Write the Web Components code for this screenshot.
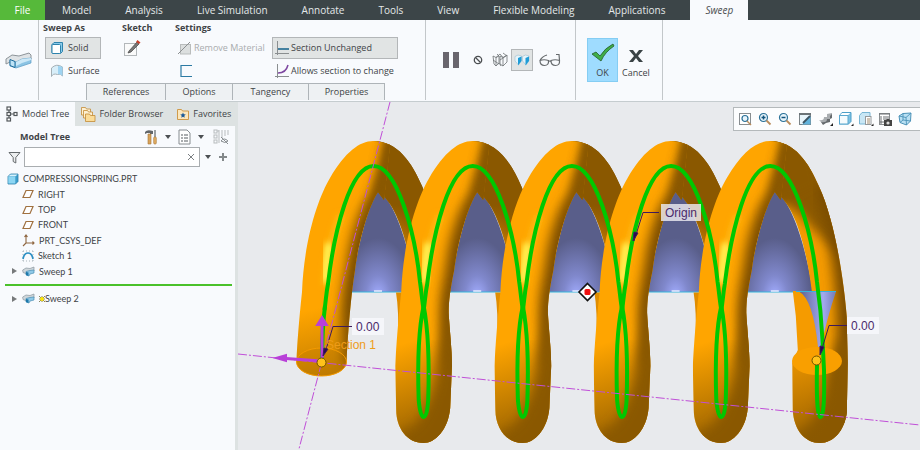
<!DOCTYPE html>
<html lang="en">
<head>
<meta charset="utf-8">
<title>Sweep</title>
<style>
html,body{margin:0;height:100%}
body{font:9px/14px "Open Sans","Noto Sans",sans-serif;color:#404346;background:#f8fafd}
</style>
</head>
<body>
<cad-app></cad-app>
<script>
const ICONS = {
  sweepBig: [28, 22, `<path d="M1 10l6-4 7 1 10-3 2 2v4l-9 4-6 1-6-2-4 2z" fill="#dfe3e6" stroke="#8d9499"/><path d="M5 11l6 2 6-3 9-1v5l-9 3-6 2-6-2z" fill="#8cc4e4" stroke="#5b9cc4" stroke-width=".7"/><path d="M11 13l6-3 9-1v2l-9 3-6 3z" fill="#cce8f7"/><path d="M5 10.500l5 2v6l-5-2z" fill="#bfe3f6" stroke="#1d6d9c"/>`],
  solid: [14, 14, `<path d="M2 3.500l2-2h8.500v9l-2 2H3q-1 0-1-1z" fill="#8bcbea" stroke="#2e83ad"/><rect x="2" y="3.500" width="8.500" height="9" rx="1" fill="#fff" stroke="#2e83ad"/>`],
  surface: [14, 14, `<path d="M1.500 4q5-5 11-1v9q-2-3-5-1.500Q3 9 1.500 12.500z" fill="#d8eef9" stroke="#a5b0b6"/><path d="M8 2q3 0 4.500 1v9Q11 10 8 10z" fill="#9fd3f1"/>`],
  sketch: [18, 18, `<rect x="1.500" y="4.500" width="12" height="12" fill="#fafafa" stroke="#b3b7ba"/><path d="M6 12l8-9 2 2-8 8-3 1z" fill="#777" stroke="#444" stroke-width=".7"/><path d="M13 3l1.500-2 3 2.500L16 5z" fill="#c8402b"/>`],
  remove: [16, 14, `<rect x="3.500" y="3.500" width="10" height="9.500" fill="#dcdfdf" stroke="#b9bcbc"/><path d="M1 13L13 1" stroke="#8c8f91"/>`],
  thin: [14, 14, `<path d="M13 1.500H2v11h11" fill="none" stroke="#2c7aa3" stroke-width="1.200"/>`],
  constant: [16, 16, `<path d="M3.500 1v14M1 13.500h14" stroke="#8a8e90"/><path d="M4 9h11" stroke="#10608a" stroke-width="1.500"/>`],
  variable: [16, 16, `<path d="M3.500 1v14M1 13.500h14" stroke="#8a8e90"/><path d="M4 10q8 0 10-8" fill="none" stroke="#7d46a0" stroke-width="1.500"/>`],
  pause: [18, 18, `<path d="M1 1h6v16H1zM11 1h6v16h-6z" fill="#69656d"/>`],
  none: [10, 10, `<circle cx="5" cy="5" r="3.700" fill="none" stroke="#4c4f52" stroke-width="1.300"/><path d="M2.500 2.500l5 5" stroke="#4c4f52" stroke-width="1.300"/>`],
  unattached: [16, 16, `<path d="M1 4l3 1.500L7 4v7l-3 3-2-2zM4 5.500V14M8 4l3 1.500L15 3v7l-4 4-3-2zM11 5.500V14M7 4L5 2M4 5.500L8 2l3 3.500M11 1l4 3M7 11l2 3M1 8l6 4M8 8l6-4" fill="none" stroke="#6d7275" stroke-width=".8"/>`],
  verify: [16, 14, `<path d="M1 3.500L4 2l3.500 1v4.500L4.500 12 1 8z" fill="#e5f4fb" stroke="#9dbccb" stroke-width=".6"/><path d="M4 5l3.500-1.500V8L4 12.500z" fill="#1f9cd6"/><path d="M8.500 3.500l3-1.500L15 3v4.500L12 12 8.500 8z" fill="#e5f4fb" stroke="#9dbccb" stroke-width=".6"/><path d="M11.500 5L15 3.500V8l-3.500 4.500z" fill="#1f9cd6"/>`],
  glasses: [22, 14, `<g fill="none" stroke="#666a6d" stroke-width="1.200"><path d="M1 7.500q4-1.500 8.500 0 .5 5-4 5T1 7.500zM12 7.500q4-1.500 8.500 0 .5 5-4 5T12 7.500zM9.500 8.500q1.200-1 2.500 0M1 7.500q2-4 7-5.500M20.500 7.500L20 1.500l-3 0"/></g>`],
  ok: [24, 20, `<path d="M1 11l4-2 4 4q5-8 13-12l1 2Q14 9 10 18z" fill="#3fae49" stroke="#245c2b" stroke-width=".8"/>`],
  cancel: [16, 14, `<path d="M1 1h4l3 4 3-4h4l-5 6 5 6h-4L8 9l-3 4H1l5-6z" fill="#3a4245"/>`],
  tree: [13, 16, `<g fill="#fff" stroke="#53585b" stroke-width="1.200"><path d="M3 3v10M3 8h6" fill="none"/><rect x="1" y="1" width="3.500" height="3"/><rect x="1" y="6.500" width="3.500" height="3"/><rect x="1" y="12" width="3.500" height="3"/><rect x="8" y="6.500" width="3" height="3"/></g>`],
  folders: [16, 16, `<g stroke="#c38a35" stroke-width=".8"><path d="M1.500 1.500h4l1 1.500h4v6h-9z" fill="#fdf0d2"/><path d="M3.500 4.500h4l1 1.500h4v6h-9z" fill="#fdf0d2"/><path d="M5.500 8h4l1 1.500h4.500v6H5.500z" fill="#fbdc98"/></g>`],
  favorite: [14, 14, `<path d="M1.500 2.500h4l1 1.500H12.500v8.500h-11z" fill="#fbe7bd" stroke="#d09b4b"/><path d="M7 5.500l.8 1.800 2 .2-1.500 1.300.4 2L7 9.800l-1.700 1 .4-2-1.500-1.300 2-.2z" fill="#1a5a9a"/>`],
  tools: [14, 16, `<path d="M1 3q2-3 8-1v3H6V4H3L1 5z" fill="#62666a"/><path d="M4 5h3v10H4z" fill="#d9a35a" stroke="#a67536" stroke-width=".6"/><path d="M11 1v7" stroke="#74797c" stroke-width="1.400"/><rect x="9.700" y="8" width="2.600" height="7" rx="1" fill="#e2ae62" stroke="#a67536" stroke-width=".6"/>`],
  list: [13, 16, `<path d="M1 1h8l3 3v11H1z" fill="#fff" stroke="#868c90"/><path d="M3 6h2M6 6h4M3 9h2M6 9h4M3 12h2M6 12h4" stroke="#565c60"/>`],
  hideTree: [16, 16, `<g fill="none" stroke="#b7bbbd"><rect x="1" y="1" width="3" height="3"/><rect x="1" y="6" width="3" height="3"/><rect x="1" y="11" width="3" height="3"/><path d="M6 1v13M9 1v8M12 1v6M15 1v5M4 2h2"/></g><path d="M8 12q3-4 7 0-3 3-7 0M8 8l7 7" fill="none" stroke="#888d90"/>`],
  filter: [13, 13, `<path d="M1 1.500h11L7.800 6.500v5.500l-2.600-1.500v-4z" fill="#eceeef" stroke="#64696c"/>`],
  down: [6, 4, `<path d="M0 0h6L3 4z" fill="#4c5053"/>`],
  plus: [10, 10, `<path d="M5 1v8M1 5h8" stroke="#83888a" stroke-width="2"/>`],
  clear: [8, 8, `<path d="M1 1l6 6M7 1L1 7" stroke="#7b7f82"/>`],
  part: [12, 12, `<path d="M1 3.500l2.500-2.500H11v7.500L8.500 11H1z" fill="#3b9dcb" stroke="#2d7ea8" stroke-width=".8"/><rect x="1.300" y="3.500" width="7" height="7" fill="#8dd6f3"/><path d="M1.500 3.300L3.600 1.400h7L8.500 3.300z" fill="#d8f2fc"/>`],
  plane: [12, 10, `<path d="M4 1.500h7L8 8.500H1z" fill="#fff" stroke="#a07140" stroke-width="1.200"/>`],
  csys: [13, 13, `<path d="M4 1v8h8M4 9l-3 3M2.500 3L4 1l1.500 2M10.500 7.500l1.500 1.500-1.500 1.500" fill="none" stroke="#8f6640" stroke-width="1.100"/>`],
  curve: [12, 12, `<path d="M1 1v10M11 1v10M1 1h10M1 11h10" fill="none" stroke="#a9b4ba" stroke-dasharray="1 2"/><path d="M1 9Q2 3 6 3t5 6" fill="none" stroke="#2c8fc4" stroke-width="1.700"/>`],
  sweep: [13, 11, `<path d="M.7 4L4 2l4 .5L12 1v4l-4 1-3 2-4-1.500z" fill="#cfd6da" stroke="#8a979f" stroke-width=".7"/><path d="M4 5.500l4-1L12 4v3L8 8l-1 2-3-1z" fill="#8fc9e8" stroke="#4b8fb5" stroke-width=".7"/><path d="M4 6l2.500.5V10L4 9z" fill="#1d78aa"/>`],
  expand: [5, 6, `<path d="M0 0l5 3-5 3z" fill="#77797b"/>`],
  star: [6, 6, `<path d="M0 0l6 6M6 0L0 6M3 0v6M0 3h6" stroke="#55501b" stroke-width=".7"/><circle cx="3" cy="3" r="1.900" fill="#ffe600"/>`],
  zoomFit: [14, 14, `<rect x="1.500" y="1.500" width="11" height="11" fill="#fff" stroke="#888d90"/><circle cx="7" cy="6.500" r="3" fill="#e7f4fb" stroke="#2a7198" stroke-width="1.200"/><path d="M9 9l4 4" stroke="#b98c5c" stroke-width="1.500"/>`],
  zoomIn: [14, 14, `<circle cx="5.500" cy="5.500" r="4" fill="#e7f4fb" stroke="#2a7198" stroke-width="1.200"/><path d="M5.500 3.500v4M3.500 5.500h4" stroke="#10547e" stroke-width="1.500"/><path d="M8.500 8.500l4 4" stroke="#b98c5c" stroke-width="1.800"/>`],
  zoomOut: [14, 14, `<circle cx="5.500" cy="5.500" r="4" fill="#e7f4fb" stroke="#2a7198" stroke-width="1.200"/><path d="M3.500 5.500h4" stroke="#10547e" stroke-width="1.500"/><path d="M8.500 8.500l4 4" stroke="#b98c5c" stroke-width="1.800"/>`],
  repaint: [14, 14, `<rect x="1.500" y="1.500" width="11" height="11" fill="#a9d7ef" stroke="#7b8488"/><path d="M2 2h10v3L5 12H2z" fill="#e8f5fb"/><path d="M12.500 4v8.500H4z" fill="#62b3dc"/><path d="M12 4l-7 7" stroke="#3c5564" stroke-width="1.800"/><path d="M1 2h12" stroke="#6b7377" stroke-width="2"/>`],
  style: [16, 16, `<path d="M1 9q5 1 5-3l3 0V3l5-1v4l-2 1v3l-4 1-3 2z" fill="#a9adb0"/><path d="M3 11q6 1 6-3h3V5l2-2v4l-2 1v3l-4 1-3 2z" fill="#666a6d"/><path d="M12 15l3-3v3z" fill="#222"/>`],
  display: [16, 16, `<path d="M1.500 4.500l2.500-3h9v9l-2.500 2.500h-9z" fill="#7fc2e3" stroke="#4d9fc8"/><rect x="1.500" y="4.500" width="8.500" height="8.500" fill="#f4fbfe" stroke="#5ba8cf"/><path d="M4.200 2h8l-2 2h-8z" fill="#fff"/><path d="M13 15l2.500-2.500V15z" fill="#222"/>`],
  saved: [16, 16, `<path d="M1.500 4.500l2.500-3h8v9l-2 2.500H1.500z" fill="#c9e7f5" stroke="#79b6d4"/><rect x="7.500" y="5.500" width="5.500" height="8" fill="#fff" stroke="#94999c"/><path d="M9 8h3M9 10h3M9 12h3" stroke="#8c6d45" stroke-width=".8"/><path d="M13 15l2.500-2.500V15z" fill="#222"/>`],
  manager: [15, 15, `<rect x="1.500" y="1.500" width="10" height="11" fill="#fff" stroke="#8a8e90"/><path d="M1 2h11M3 4v8M5 5h6M5 7h6M2 10h4" stroke="#6b6f72"/><path d="M6 8h2l1-1h2l1 1h2v6H6z" fill="#444"/><circle cx="10" cy="11" r="1.600" fill="#ddd"/>`],
  perspective: [14, 14, `<path d="M1 4l4-2.500 8-.5-.5 8-4 4L2 10.500z" fill="#b9e0f3" stroke="#4b92b8"/><path d="M1 4l7 1.500 5-4.500M8 5.500l.500 7.500M2 10.500l3-2.500V1.500M5 8l7.500 1" fill="none" stroke="#4b92b8" stroke-width=".9"/>`]
};

class UiIcon extends HTMLElement {
  connectedCallback() {
    const [w, h, body] = ICONS[this.getAttribute('name')];
    this.attachShadow({mode: 'open'}).innerHTML =
      `<style>:host{display:inline-flex;flex:none}svg{display:block;overflow:visible}</style>
       <svg width="${w}" height="${h}" viewBox="0 0 ${w} ${h}" aria-hidden="true">${body}</svg>`;
  }
}

function define(name, css, html) {
  customElements.define(name, class extends HTMLElement {
    connectedCallback() {
      if (this.shadowRoot) return;
      const t = document.createElement('template');
      t.innerHTML = `<style>*{box-sizing:border-box}button,input{font:inherit;color:inherit}${css}</style>${typeof html === 'function' ? html(this) : html}`;
      this.attachShadow({mode: 'open'}).append(t.content.cloneNode(true));
    }
  });
}
customElements.define('ui-icon', UiIcon);

/* A flat command button: optional icon, slotted label. */
define('tool-button', `
  :host{display:inline-flex}
  button{display:flex;align-items:center;gap:4px;flex:1;margin:0;padding:0;border:1px solid transparent;background:none;white-space:nowrap}
  :host([wide]) button{padding:0 4px;height:22px}
  :host([pressed]) button{background:#e1e4e4;border-color:#b3b6b8}
  :host([square]) button{width:22px;height:22px;justify-content:center}
  :host([off]) button{color:#a9acae}
  :host([flush]) button{padding:0 1px;gap:1px}
  :host([stack]) button{flex-direction:column;justify-content:flex-end;gap:3px;height:44px;padding:0 1px 1px}
  :host([primary]) button{background:#9fdcff;border-color:#85cdf3;min-width:31px}`,
  el => `<button type="button" ${el.title ? `aria-label="${el.title}"` : ''} ${el.hasAttribute('off') ? 'disabled' : ''}>
    <ui-icon name="${el.getAttribute('icon')}"></ui-icon><slot></slot></button>`);

define('menu-tab', `
  :host{display:flex}
  button{border:0;background:none;padding:0 17px;color:#e4e8e9;white-space:nowrap}
  :host([file]) button{background:#56b93a;padding:0 14px;min-width:45px;color:#fff}
  :host([current]) button{background:#f8fafd;color:#4c4f52;font-style:italic;padding:0 15px;margin-left:8px}`,
  `<button type="button" role="tab"><slot></slot></button>`);

define('menu-bar', `
  :host{display:flex;height:20px;background:#3c4548;font-size:10px}`,
  ['File','Model','Analysis','Live Simulation','Annotate','Tools','View','Flexible Modeling','Applications','Sweep']
    .map(t => `<menu-tab ${t === 'File' ? 'file' : t === 'Sweep' ? 'current' : ''}>${t}</menu-tab>`).join(''));

define('sweep-ribbon', `
  :host{display:flex;height:82px;background:#f8fafd;border-bottom:1px solid #c5cccf}
  section{border-right:1px solid #c3c7ca;display:flex;align-items:center;margin-bottom:1px}
  .mark{width:39px;justify-content:center}
  .main{width:387px;flex-direction:column;align-items:stretch;justify-content:space-between}
  .groups{display:grid;grid-template-columns:79px 53px 97px 1fr;padding:0 27px 0 4px}
  .group{display:grid;grid-template-rows:16px 22px 22px;row-gap:1px;justify-items:start;align-items:center}
  .wide{justify-items:stretch}
  nav{display:flex;margin-left:47px}
  nav button{height:17px;padding:0;border:1px solid #aeb4b8;border-bottom:0;border-right:0;background:#eef1f3}
  nav button:last-child{border-right:1px solid #aeb4b8}
  .play{width:150px;padding:0 0 0 15px;gap:11px}
  .pair{display:flex;align-items:center;gap:2px;margin-left:-4px}
  .done{width:87px;align-items:flex-start;padding:18px 0 0 11px;gap:2px}`, `
  <section class="mark"><tool-button icon="sweepBig" title="Sweep"></tool-button></section>
  <section class="main">
    <div class="groups">
      <div class="group"><b>Sweep As</b><tool-button wide pressed icon="solid" style="width:56px;margin-left:2px">Solid</tool-button><tool-button wide icon="surface" style="margin-left:2px">Surface</tool-button></div>
      <div class="group"><b>Sketch</b><tool-button icon="sketch" title="Sketch"></tool-button></div>
      <div class="group"><b>Settings</b><tool-button off flush icon="remove">Remove Material</tool-button><tool-button icon="thin" title="Thin feature" style="margin-left:3px"></tool-button></div>
      <div class="group wide"><span></span><tool-button wide flush pressed icon="constant">Section Unchanged</tool-button><tool-button wide flush icon="variable">Allows section to change</tool-button></div>
    </div>
    <nav><button style="width:79px">References</button><button style="width:67px">Options</button><button style="width:76px">Tangency</button><button style="width:77px">Properties</button></nav>
  </section>
  <section class="play">
    <tool-button icon="pause" title="Pause"></tool-button><tool-button icon="none" title="No preview"></tool-button>
    <div class="pair"><tool-button icon="unattached" title="Unattached preview"></tool-button><tool-button square pressed icon="verify" title="Attached preview"></tool-button></div>
    <tool-button icon="glasses" title="Verify" style="margin-left:-6px"></tool-button>
  </section>
  <section class="done"><tool-button stack primary icon="ok">OK</tool-button><tool-button stack icon="cancel">Cancel</tool-button></section>`);

define('panel-tab', `
  :host{display:flex}
  button{display:flex;align-items:center;gap:3px;border:0;background:none;padding:0 5px 1px;white-space:nowrap}
  :host([current]) button{background:#f8fafd;padding:0 6px 1px 6px}`,
  el => `<button type="button" role="tab"><ui-icon name="${el.getAttribute('icon')}"></ui-icon><slot></slot></button>`);

define('tree-item', `
  :host{display:flex;align-items:center;gap:4px;padding-left:22px;line-height:15px;font:9px/15px Lato,"Open Sans",sans-serif}
  :host([root]){padding-left:7px}
  :host([branch]){padding-left:12px}
  .flag{margin:0 -4px 0 0}`,
  el => `${el.hasAttribute('branch') ? '<ui-icon name="expand" style="margin-right:1px"></ui-icon>' : ''}<ui-icon name="${el.getAttribute('icon')}"></ui-icon>${el.hasAttribute('fresh') ? '<ui-icon class="flag" name="star"></ui-icon>' : ''}<span><slot></slot></span>`);

define('model-tree', `
  :host{display:block;background:#f8fafd;border-right:3px solid #dde2e2}
  .tabs{display:flex;height:24px;background:#dde2e2;margin-right:-3px}
  .head{display:flex;align-items:center;height:21px;padding:0 5px 0 20px}
  .head b{flex:1}
  .find{display:flex;align-items:center;height:20px;padding-left:8px}
  .box{display:flex;align-items:center;width:176px;height:20px;margin:0 4px 0 3px;border:1px solid #a9adb0;background:#fff;padding-right:3px}
  input{flex:1;min-width:0;border:0;background:none;outline:0;padding:0 3px;height:18px}
  .rows{display:grid;grid-auto-rows:1fr;height:108px;margin-top:4px}
  hr{border:0;height:2px;background:#4bc12b;margin:5px 3px 5px 5px}`, `
  <div class="tabs" role="tablist"><panel-tab current icon="tree">Model Tree</panel-tab><panel-tab icon="folders">Folder Browser</panel-tab><panel-tab icon="favorite" style="margin-left:3px">Favorites</panel-tab></div>
  <div class="head"><b>Model Tree</b>
    <tool-button icon="tools" title="Settings"></tool-button><tool-button icon="down" title="Settings menu" style="margin:0 5px"></tool-button>
    <tool-button icon="list" title="Show"></tool-button><tool-button icon="down" title="Show menu" style="margin:0 7px 0 5px"></tool-button>
    <tool-button icon="hideTree" title="Tree columns"></tool-button></div>
  <div class="find"><ui-icon name="filter"></ui-icon>
    <div class="box"><input type="text" aria-label="Filter the tree"><tool-button icon="clear" title="Clear"></tool-button></div>
    <tool-button icon="down" title="Filter menu"></tool-button><tool-button icon="plus" title="Add" style="margin-left:5px"></tool-button></div>
  <div class="rows" role="tree">
    <tree-item role="treeitem" root icon="part">COMPRESSIONSPRING.PRT</tree-item>
    <tree-item role="treeitem" icon="plane">RIGHT</tree-item>
    <tree-item role="treeitem" icon="plane">TOP</tree-item>
    <tree-item role="treeitem" icon="plane">FRONT</tree-item>
    <tree-item role="treeitem" icon="csys">PRT_CSYS_DEF</tree-item>
    <tree-item role="treeitem" icon="curve">Sketch 1</tree-item>
    <tree-item role="treeitem" branch icon="sweep">Sweep 1</tree-item>
  </div>
  <hr>
  <tree-item role="treeitem" branch fresh icon="sweep">Sweep 2</tree-item>`);

define('view-bar', `
  :host{display:flex;align-items:center;height:24px;padding-left:3px;background:#fcfdfe;border:1px solid #b4b9bb;border-right:0;box-sizing:border-box}
  tool-button{width:20px}
  ui-icon{margin:auto}`,
  [['zoomFit','Refit'],['zoomIn','Zoom in'],['zoomOut','Zoom out'],['repaint','Repaint'],['style','Rendering'],['display','Display style'],['saved','Saved views'],['manager','View manager'],['perspective','Perspective']]
    .map(([i, t]) => `<tool-button icon="${i}" title="${t}"></tool-button>`).join(''));

const PITCH = 99.2;
const at = (i, id) => `<use href="#${id}" transform="translate(${i * PITCH} 0)"/>`;
const all = (from, to, id) => Array.from({length: to - from + 1}, (_, k) => at(from + k, id)).join('');
const ARCH = 'C304 240 318 198 330 178C345 152 360 141 373 141Q380 141 390 145L384 200L378 192C368 207 358 245 355 270';

define('spring-view', `
  :host{display:block;position:relative;background:#e8eaed;overflow:hidden}
  svg{position:absolute;inset:0;width:100%;height:100%}
  view-bar{position:absolute;right:0;top:5px;width:187px}
  text{font:12px "Liberation Sans",Arial,sans-serif}`, `
  <svg viewBox="238 102 682 348" preserveAspectRatio="xMinYMin meet" role="img" aria-label="Compression spring with sweep preview">
    <defs>
      <filter id="b3" x="-50%" y="-50%" width="200%" height="200%"><feGaussianBlur stdDeviation="3"/></filter>
      <filter id="b6" x="-50%" y="-50%" width="200%" height="200%"><feGaussianBlur stdDeviation="6"/></filter>
      <radialGradient id="surf" gradientUnits="userSpaceOnUse" cx="378" cy="296" r="58" gradientTransform="translate(378 0) scale(.62 1) translate(-378 0)">
        <stop offset="0" stop-color="#a3adff"/><stop offset=".35" stop-color="#8088cc"/><stop offset="1" stop-color="#595e8a"/></radialGradient>
      <linearGradient id="back" gradientUnits="userSpaceOnUse" x1="396" y1="255" x2="430" y2="240">
        <stop offset="0" stop-color="#f59b00"/><stop offset="1" stop-color="#8a5800"/></linearGradient>
      <linearGradient id="fade" gradientUnits="userSpaceOnUse" x1="0" y1="205" x2="0" y2="255">
        <stop offset="0" stop-color="#8a5800"/><stop offset="1" stop-color="#8a5800" stop-opacity="0"/></linearGradient>
      <linearGradient id="low" gradientUnits="userSpaceOnUse" x1="300" y1="345" x2="325" y2="425">
        <stop offset="0" stop-color="#8a5800" stop-opacity="0"/><stop offset="1" stop-color="#8a5800"/></linearGradient>
      <linearGradient id="foot" gradientUnits="userSpaceOnUse" x1="310" y1="310" x2="325" y2="375">
        <stop offset="0" stop-color="#8a5800" stop-opacity="0"/><stop offset="1" stop-color="#8a5800" stop-opacity=".5"/></linearGradient>
      <linearGradient id="spike" x1="0" y1="0" x2="1" y2="0"><stop offset="0" stop-color="#5c628f"/><stop offset=".65" stop-color="#a3aaf0"/><stop offset="1" stop-color="#747bb4"/></linearGradient>
      <clipPath id="cf"><path d="M302 292${ARCH}C351 290 349.500 300 349.500 313C350 325 352.800 350 352.800 366L351 408C349 430 336 443 324.300 443C308 443 297 428 297 410L296 366C297 345 299 320 302 292Z"/></clipPath>
      <clipPath id="c0"><path d="M302 292${ARCH}C351 295 348 330 346.500 362A25 14 0 0 1 296.500 362C297 345 299 320 302 292Z"/></clipPath>
      <clipPath id="cl"><path d="M373 141C398 141 412 163 422 186C438 220 447 280 450 317L451 363L450 412C448 431 436 443 423.500 443C408 443 397 430 396 410L395.500 363L401 350L399 316L396 291L415 291C410 250 398 203 378 192Z"/></clipPath>
      <g id="surface"><path d="M350 292C355 262 366 207 378 190C395 200 410 250 416 292Z" fill="url(#surf)"/><path d="M350 292H416" stroke="#35b5dc"/><path d="M374 291h8" stroke="#e4ecff" stroke-width="1.500"/></g>
      <g id="arch"><path d="M373 141C398 141 412 163 422 186C430 204 437 230 440 260L440 292H415C410 250 398 203 378 192Z" fill="url(#back)"/><path d="M373 141C398 141 412 163 422 186C430 204 437 230 440 260L415 292C410 250 398 203 378 192Z" fill="url(#fade)"/><path d="M396 292.500h10l-4 50-4-2q1-30-2-48z" fill="#e08d00"/></g>
      <g id="shade">
        <rect x="290" y="135" width="110" height="315" fill="#ffa500"/>
        <path d="M399 143L381 200C368 212 360 245 357 270C353 290 352 300 352 313L355 366" fill="none" stroke="#7c4e00" stroke-width="22" filter="url(#b6)"/>
        <path d="M388 120L381 165L368 215H410V120z" fill="#8a5800" filter="url(#b6)"/>
        <path d="M388 130L384 165L378 205H410V130z" fill="#8a5800" filter="url(#b3)"/>
      </g>
      <g id="shine"><path d="M341 215Q329 245 325 285" fill="none" stroke="#ffc21e" stroke-width="5" filter="url(#b3)"/><path d="M329 243Q326 260 325 282" fill="none" stroke="#ffff60" stroke-width="7" filter="url(#b3)"/></g>
      <g id="front"><g clip-path="url(#cf)"><use href="#shade"/><path d="M296 340h60v105h-60z" fill="url(#low)" opacity=".75"/>
        <path d="M350 290L344 330L337 370Q333 405 316 425L290 440V460H370V290z" fill="#8a5800" filter="url(#b6)"/><use href="#shine"/></g></g>
      <path id="wire" d="M324.500 306C319 330 318.500 370 319.500 400Q321 417 324.500 417T329 400C330 370 329 330 324.500 306"/>
      <path id="rise" d="M324.500 310C326 300 326 294 328 284C334 232 350 166 373.500 166S415 232 420 282C421.500 292 422 300 423.700 310"/>
    </defs>
    ${all(0, 4, 'surface')}
    ${all(0, 3, 'arch')}
    <g transform="translate(${4 * PITCH} 0)"><g clip-path="url(#cl)">
      <rect x="370" y="135" width="90" height="315" fill="#f59b00"/>
      <path d="M360 130L368 200Q398 205 412 225L455 265V130z" fill="#8a5800" filter="url(#b6)"/>
      <path d="M370 135h40l10 50-30 15-22 0z" fill="#8a5800"  filter="url(#b3)"/>
      <path d="M428 185Q450 250 451 330V445" fill="none" stroke="#7c4e00" stroke-width="22" filter="url(#b6)"/>
      <path d="M442 340L430 375Q428 405 412 425L390 440V460H470V340z" fill="#8a5800" filter="url(#b6)"/>
      <path transform="translate(99.200 0)" d="M296 360h60v85h-60z" fill="url(#low)" opacity=".75"/>
    </g></g>
    <path d="M799 291.500H836Q827 318 821 347H818Q813 299 799 291.500Z" fill="url(#spike)"/><path d="M796 291.500h40" stroke="#35b5dc"/>
    <ellipse cx="817" cy="361" rx="25" ry="14" fill="#f99f00"/>
    <g clip-path="url(#c0)"><use href="#shade"/><path d="M290 300h65v80h-65z" fill="url(#foot)"/><use href="#shine"/></g>
    ${all(1, 4, 'front')}
    <ellipse cx="321.500" cy="362" rx="25" ry="14" fill="#a86c00" fill-opacity=".2" stroke="#f49a00"/>
    <g fill="none" stroke="#00c800" stroke-width="4" stroke-linejoin="round">
      ${all(0, 3, 'rise')}${all(1, 4, 'wire')}
      <path d="M322 362Q322 330 325 306"/>
      <path d="M721.300 310C723 300 723 294 724.800 284C731 232 747 166 770.300 166S812 232 817 282Q821 310 822.500 340L824 370Q825 417 820.500 417T817 365"/>
    </g>
    <g stroke="#c04fd8" stroke-dasharray="9 2 2 2"><path d="M390 102L298.700 450M238 354L920 425"/></g>
    <g stroke="#b840d8" stroke-width="3" fill="#b840d8"><path d="M321 361L286 358.500"/><path d="M322 358V326"/><path d="M276 358l10-3v6zM322 317l-5 8h10z" stroke-width="2"/></g>
    <g stroke="#3d1a5c" fill="none"><path d="M352 326.500H333L325 353M659 212.500H643L634 241M847 325.500H829L821 352"/><path d="M323 356l1-8 4 1zM633 241l1-9 4 1zM820 355l0-9 4 1z" fill="#2a0a50"/></g>
    <text x="326" y="349" fill="#ee9c18">Section 1</text>
    <rect x="352" y="318" width="32" height="17" fill="#f5f6fa"/><rect x="661" y="204" width="40" height="17" fill="#eceaf0" fill-opacity=".82"/><rect x="847" y="317" width="32" height="17" fill="#f5f6fa"/>
    <g fill="#4a2a6a"><text x="356" y="331">0.00</text><text x="665" y="217">Origin</text><text x="851" y="330">0.00</text></g>
    <g fill="#ffc21a" stroke="#6d5200"><circle cx="321.500" cy="362.500" r="4.500"/><circle cx="816.500" cy="360.500" r="4.500"/></g>
    <path d="M587.500 283.500l8.500 8.500-8.500 8.500-8.500-8.500z" fill="#fff" stroke="#111" stroke-width="1.600"/><rect x="584.500" y="289" width="6" height="6" rx="1.500" fill="#f01010"/>
  </svg>
  <view-bar></view-bar>`);

define('cad-app', `
  :host{display:grid;grid-template-rows:auto auto 1fr;min-height:100vh}
  main{display:grid;grid-template-columns:238px 1fr}`, `
  <menu-bar role="tablist"></menu-bar>
  <sweep-ribbon></sweep-ribbon>
  <main><model-tree></model-tree><spring-view></spring-view></main>`);
</script>
</body>
</html>
